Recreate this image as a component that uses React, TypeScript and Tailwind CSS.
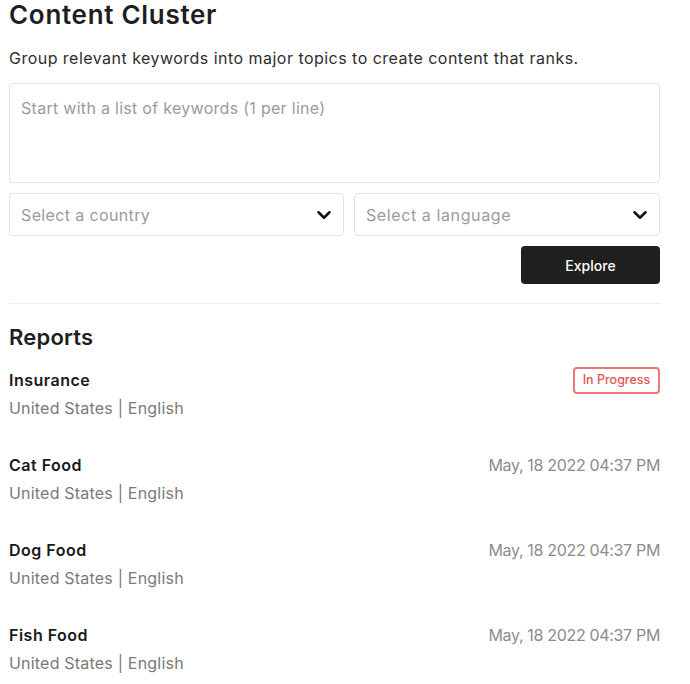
import { ChevronDown } from "lucide-react";

const reports = [
  { name: "Insurance", meta: "United States | English", status: "progress" },
  { name: "Cat Food", meta: "United States | English", date: "May, 18 2022 04:37 PM" },
  { name: "Dog Food", meta: "United States | English", date: "May, 18 2022 04:37 PM" },
  { name: "Fish Food", meta: "United States | English", date: "May, 18 2022 04:37 PM" },
];

function SelectBox({
  label,
  className = "",
  tracking = "",
}: {
  label: string;
  className?: string;
  tracking?: string;
}) {
  return (
    <button
      type="button"
      className={`flex h-[43px] items-center justify-between rounded-[4px] border border-[#e3e3e3] bg-white pl-[11px] pr-2 text-left text-[16px] text-[#9b9b9b] ${className}`}
    >
      <span className={tracking}>{label}</span>
      <ChevronDown className="h-[22px] w-[22px] text-[#111]" strokeWidth={2.75} />
    </button>
  );
}

export default function App() {
  return (
    <div
      className="min-h-screen w-full bg-white px-[9px]"
      style={{ fontFamily: "Inter, 'Noto Sans', sans-serif" }}
    >
      <div className="w-[651px]">
        {/* Header */}
        <h1 className="text-[26px] font-semibold leading-[30px] tracking-[0.7px] text-[#1e1e1e]">
          Content Cluster
        </h1>
        <p className="mt-4 text-[16px] leading-6 tracking-[0.47px] text-[#2e2e2e]">
          Group relevant keywords into major topics to create content that ranks.
        </p>

        {/* Form */}
        <textarea
          placeholder="Start with a list of keywords (1 per line)"
          className="mt-[13px] block h-[100px] w-full resize-none rounded-[4px] border border-[#e3e3e3] px-[11px] pt-3 text-[16px] leading-6 tracking-[0.29px] text-[#333] outline-none placeholder:text-[#9b9b9b]"
        />
        <div className="mt-[10px] flex gap-[10px]">
          <SelectBox label="Select a country" className="w-[335px]" tracking="tracking-[0.37px]" />
          <SelectBox label="Select a language" className="w-[306px]" tracking="tracking-[0.6px]" />
        </div>
        <div className="mt-[10px] flex justify-end">
          <button
            type="button"
            className="h-[38px] w-[139px] rounded-[4px] bg-[#1f1f1f] text-[14px] font-medium text-white"
          >
            Explore
          </button>
        </div>

        <div className="mt-[19px] h-px w-full bg-[#ededed]" />

        {/* Reports */}
        <h2 className="mt-[19px] text-[22px] font-semibold leading-[28px] tracking-[0.2px] text-[#1e1e1e]">
          Reports
        </h2>
        <div className="mt-[17px] flex flex-col gap-[33px]">
          {reports.map((r) => (
            <div key={r.name} className="flex flex-col gap-1">
              <div className="flex h-6 items-center justify-between">
                <span className="text-[16px] font-semibold leading-6 tracking-[0.5px] text-[#1a1a1a]">
                  {r.name}
                </span>
                {r.status === "progress" ? (
                  <span className="flex h-[27px] w-[87px] shrink-0 items-center justify-center rounded-[4px] border-2 border-[#ee7676] text-[12.5px] font-medium text-[#e45454]">
                    In Progress
                  </span>
                ) : (
                  <span className="text-[16px] leading-6 tracking-[-0.33px] text-[#8c8c8c]">
                    {r.date}
                  </span>
                )}
              </div>
              <span className="text-[16px] leading-6 tracking-[0.2px] text-[#7a7a7a]">
                {r.meta}
              </span>
            </div>
          ))}
        </div>
      </div>
    </div>
  );
}
